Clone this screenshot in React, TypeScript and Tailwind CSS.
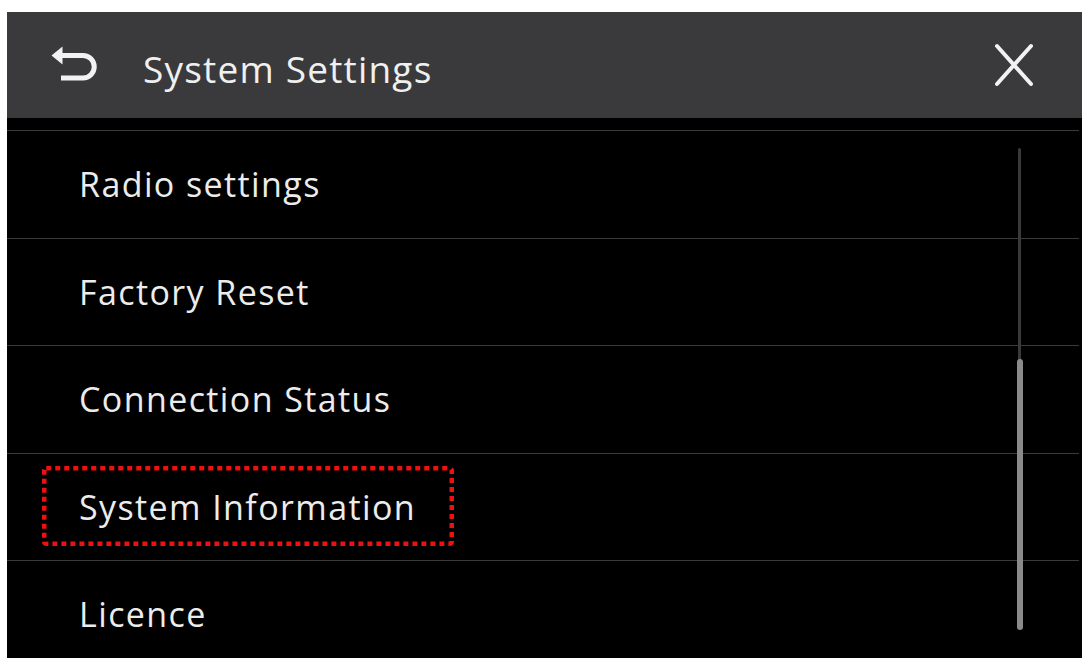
const items = ['Radio settings', 'Factory Reset', 'Connection Status', 'System Information', 'Licence'];

function BackIcon() {
  return (
    <svg width="50" height="45" viewBox="50 45 50 45" fill="none">
      <polygon points="51.5,57.5 62.5,48.5 62.5,66.5" fill="#f2f2f2" />
      <path d="M62 57.5 H83 A11.25 11.25 0 0 1 83 80 H61" stroke="#f2f2f2" strokeWidth="5" />
    </svg>
  );
}

function CloseIcon() {
  return (
    <svg width="40" height="44" viewBox="0 0 40 44" fill="none">
      <path d="M3 3 L37 41 M37 3 L3 41" stroke="#f2f2f2" strokeWidth="4" strokeLinecap="round" />
    </svg>
  );
}

// red annotation frame drawn round the highlighted entry
function DottedBox() {
  return (
    <svg className="pointer-events-none absolute left-[-37px] top-[-24px]" width="412" height="80" viewBox="0 0 412 80">
      <rect x="2.25" y="2.25" width="407.5" height="75.5" rx="2" fill="none" stroke="#ee1111" strokeWidth="4.5" strokeDasharray="5 4" />
    </svg>
  );
}

export default function App() {
  return (
    <div className="min-h-screen bg-white pl-[7px] pt-[12px]" style={{ fontFamily: "'Open Sans', 'Noto Sans', sans-serif" }}>
      <div className="relative flex h-[646px] w-[1075px] flex-col overflow-hidden bg-black">
        <header className="flex h-[106px] shrink-0 items-center bg-[#3a3a3c] pl-[43px] pr-[48px]">
          <BackIcon />
          <h1 className="ml-[43px] mt-[6px] text-[37px] leading-none tracking-[1.2px] text-[#f0f0f0]">System Settings</h1>
          <div className="ml-auto">
            <CloseIcon />
          </div>
        </header>
        <div className="relative flex-1 pt-[12px]">
          {items.map((label) => (
            <div key={label} className="mr-[3px] flex h-[107.5px] items-center border-t border-[#3a3a3a] pl-[72px]">
              <span className="relative text-[34px] leading-none tracking-[1.4px] text-[#ececec]">
                {label}
                {label === 'System Information' && <DottedBox />}
              </span>
            </div>
          ))}
          <div className="absolute right-[61px] top-[30px] h-[480px] w-[3px] rounded-full bg-[#3a3a3a]" />
          <div className="absolute right-[59px] top-[241px] h-[271px] w-[6px] rounded-full bg-[#8a8a8a]" />
        </div>
      </div>
    </div>
  );
}
